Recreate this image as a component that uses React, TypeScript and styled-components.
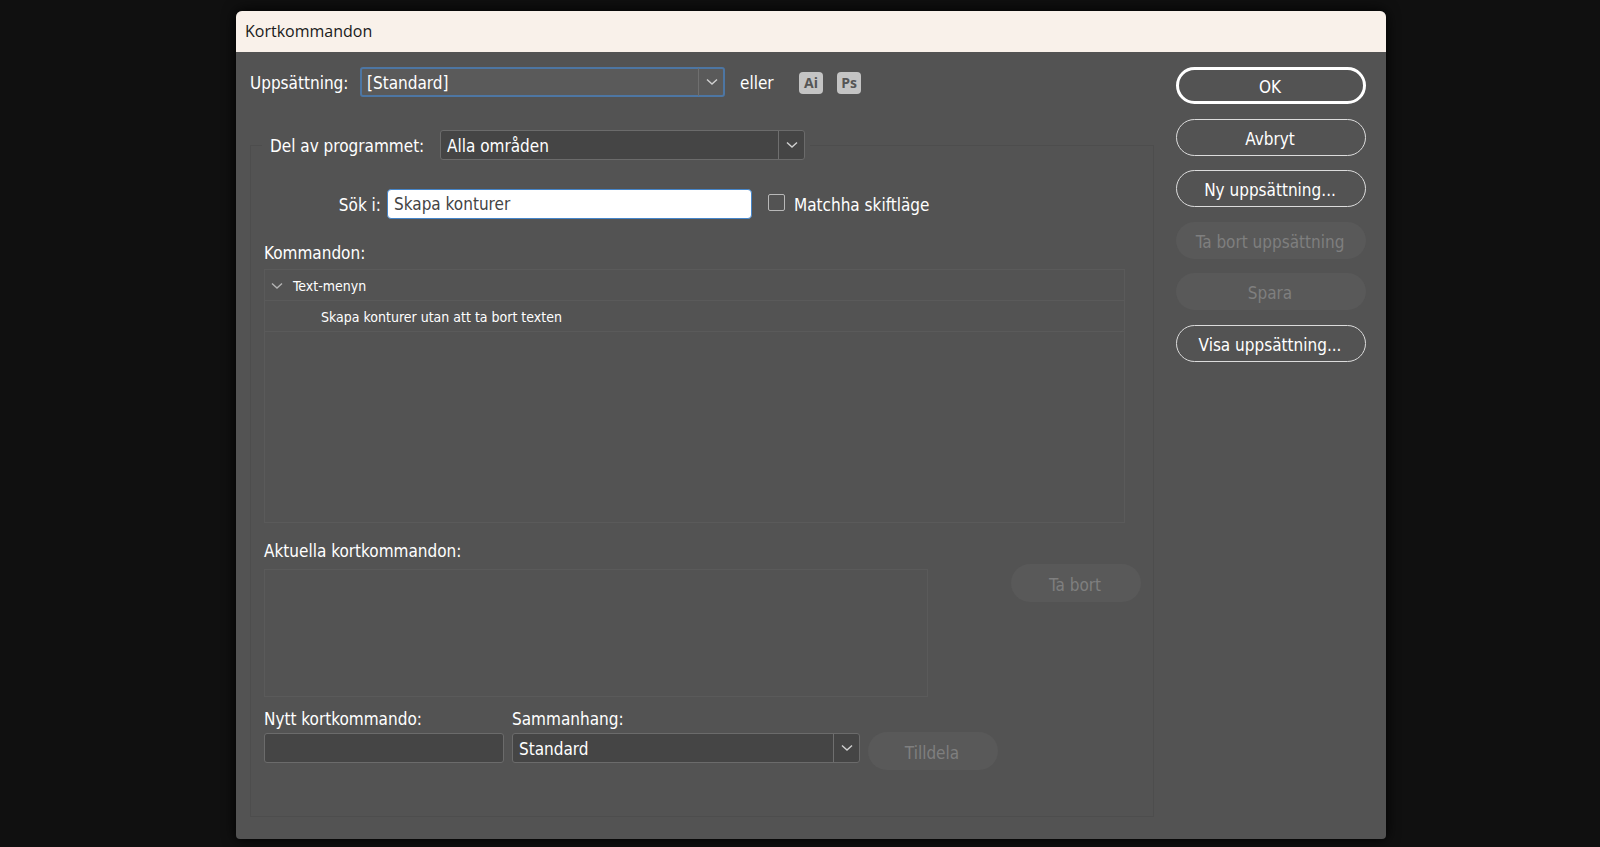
import React from "react";
import styled, { createGlobalStyle, css } from "styled-components";

const GlobalStyle = createGlobalStyle`
  *, *::before, *::after { box-sizing: border-box; }
  body {
    margin: 0;
    background: #101010;
    color: #fff;
    font: 17px/24px "DejaVu Sans Condensed", "Noto Sans", sans-serif;
  }
  button, input, select { font: inherit; color: inherit; margin: 0; }
`;

const Desktop = styled.div`
  display: flex;
  min-height: 100vh;
  padding: 11px 214px 8px 236px;
`;

const Dialog = styled.section`
  flex: 1;
  display: flex;
  flex-direction: column;
  background: #535353;
  border-radius: 6px 6px 4px 4px;
  box-shadow: 0 0 14px #000;
  overflow: hidden;
`;

const TitleBar = styled.header`
  height: 41px;
  flex: none;
  display: flex;
  align-items: center;
  padding: 0 9px 2px;
  background: #f9f1ea;
  color: #1a1a1a;
`;

const Title = styled.h1`
  margin: 0;
  font: 400 16px/24px "Open Sans", "Noto Sans", sans-serif;
`;

const Body = styled.form`
  flex: 1;
  display: flex;
  gap: 22px;
  padding: 15px 20px 22px 14px;
`;

const Main = styled.div`
  flex: 1;
  min-width: 0;
  display: flex;
  flex-direction: column;
  gap: 33px;
`;

const SetRow = styled.div`
  display: flex;
  align-items: center;
`;

const SetLabel = styled.label`
  width: 110px;
  padding-top: 2px;
`;

const OrText = styled.span`
  width: 59px;
  margin-left: 15px;
  padding-top: 2px;
`;

const AppButtons = styled.div`
  display: flex;
  gap: 14px;
  padding-top: 2px;
`;

const AppButton = styled.button`
  width: 24px;
  height: 22px;
  padding: 0;
  border: 0;
  border-radius: 4px;
  background: #c4c4c4;
  color: #555;
  font: 700 14px/20px "Open Sans", "Noto Sans", sans-serif;
`;

const Group = styled.fieldset`
  flex: 1;
  min-width: 0;
  margin: 0;
  padding: 29px 12px 46px 13px;
  border: 1px solid #4d4d4d;
  display: flex;
  flex-direction: column;
`;

const GroupLegend = styled.legend`
  display: flex;
  align-items: center;
  margin-left: -2px;
  padding: 0 5px 0 8px;
`;

const LegendLabel = styled.label`
  width: 170px;
  padding-top: 2px;
`;

const SelectFrame = styled.div<{ $width: number }>`
  position: relative;
  width: ${(p) => p.$width}px;
`;

const boxed = css`
  display: block;
  width: 100%;
  height: 30px;
  border: 1px solid #6b6b6b;
  border-radius: 3px;
  background: #454545;
  outline: 0;
`;

const SelectBox = styled.select<{ $focused?: boolean }>`
  ${boxed}
  appearance: none;
  padding: 2px 32px 0 6px;
  ${(p) =>
    p.$focused &&
    css`
      border: 2px solid #4d76a3;
      background: #5a5a5a;
      padding-left: 5px;
    `}
`;

const SelectArrow = styled.span`
  position: absolute;
  inset: 1px 1px 1px auto;
  width: 26px;
  display: grid;
  place-items: center;
  border-left: 1px solid #6f6f6f;
  pointer-events: none;
`;

const TextBox = styled.input`
  ${boxed}
  padding: 0 6px;
`;

const SearchBox = styled(TextBox)`
  width: 365px;
  border-color: #4585c9;
  border-radius: 4px;
  background: #fff;
  color: #444;
`;

const SearchRow = styled.div`
  display: flex;
  align-items: center;
`;

const SearchLabel = styled.label`
  width: 123px;
  padding: 2px 6px 0 0;
  text-align: right;
`;

const CheckLabel = styled.label`
  display: flex;
  align-items: flex-start;
  gap: 9px;
  margin-left: 16px;
`;

const CheckText = styled.span`
  padding-top: 2px;
`;

const CheckBox = styled.input`
  appearance: none;
  width: 17px;
  height: 17px;
  && {
    margin-top: 3px;
  }
  border: 1px solid #b8b8b8;
  border-radius: 2px;
`;

const Section = styled.section`
  flex: 1;
  display: flex;
  flex-direction: column;
  gap: 4px;
  margin: 22px 16px 0 0;
`;

const SectionLabel = styled.h2`
  margin: 0;
  font: inherit;
`;

const CommandTree = styled.ul`
  flex: 1;
  margin: 0;
  padding: 0;
  list-style: none;
  border: 1px solid #5a5a5a;
  font-size: 14px;
`;

const CommandItem = styled.li<{ $level: number }>`
  height: 31px;
  display: flex;
  align-items: center;
  gap: 10px;
  padding: 1px 0 0 ${(p) => (p.$level ? 56 : 6)}px;
  border-bottom: 1px solid #5a5a5a;
`;

const ShortcutRow = styled.div`
  display: flex;
  justify-content: space-between;
  align-items: flex-start;
  margin-top: 16px;
`;

const Shortcuts = styled.div`
  flex: 0 1 664px;
  display: grid;
  gap: 6px;
`;

const ShortcutList = styled.ul`
  height: 128px;
  margin: 0;
  padding: 0;
  border: 1px solid #5a5a5a;
`;

const AssignRow = styled.div`
  display: flex;
  align-items: flex-start;
  gap: 8px;
  margin-top: 10px;
`;

const Field = styled.div<{ $width: number }>`
  width: ${(p) => p.$width}px;
  display: grid;
  gap: 2px;
`;

const Rail = styled.div`
  width: 190px;
  height: 295px;
  display: flex;
  flex-direction: column;
  justify-content: space-between;
`;

const PillButton = styled.button<{ $primary?: boolean }>`
  width: 100%;
  height: 37px;
  padding: 3px 2px 0 0;
  border: ${(p) => (p.$primary ? "3px solid #fff" : "1px solid #dcdcdc")};
  border-radius: 19px;
  background: transparent;
  &:disabled {
    border-color: transparent;
    background: #595959;
    background-clip: border-box;
    color: #7f7f7f;
  }
`;

const ActionButton = styled(PillButton)`
  width: 130px;
  height: 38px;
  && {
    margin-top: 25px;
  }
`;

const Chevron = ({ color = "#d0d0d0" }: { color?: string }) => (
  <svg width="12" height="8" viewBox="0 0 12 8" fill="none" aria-hidden="true">
    <path d="M1 1.5 6 6l5-4.5" stroke={color} strokeWidth="1.4" />
  </svg>
);

type SelectProps = { id: string; width: number; option: string; focused?: boolean };

const Select = ({ id, width, option, focused }: SelectProps) => (
  <SelectFrame $width={width}>
    <SelectBox id={id} $focused={focused}>
      <option>{option}</option>
    </SelectBox>
    <SelectArrow>
      <Chevron />
    </SelectArrow>
  </SelectFrame>
);

const actions = [
  { label: "OK", primary: true },
  { label: "Avbryt" },
  { label: "Ny uppsättning..." },
  { label: "Ta bort uppsättning", disabled: true },
  { label: "Spara", disabled: true },
  { label: "Visa uppsättning..." },
];

export default function App() {
  return (
    <>
      <GlobalStyle />
      <Desktop>
        <Dialog role="dialog" aria-labelledby="title">
          <TitleBar>
            <Title id="title">Kortkommandon</Title>
          </TitleBar>
          <Body onSubmit={(e) => e.preventDefault()}>
            <Main>
              <SetRow>
                <SetLabel htmlFor="set">Uppsättning:</SetLabel>
                <Select id="set" width={365} option="[Standard]" focused />
                <OrText>eller</OrText>
                <AppButtons>
                  <AppButton type="button">Ai</AppButton>
                  <AppButton type="button">Ps</AppButton>
                </AppButtons>
              </SetRow>
              <Group>
                <GroupLegend>
                  <LegendLabel htmlFor="area">Del av programmet:</LegendLabel>
                  <Select id="area" width={365} option="Alla områden" />
                </GroupLegend>
                <SearchRow>
                  <SearchLabel htmlFor="search">Sök i:</SearchLabel>
                  <SearchBox id="search" type="text" defaultValue="Skapa konturer" />
                  <CheckLabel>
                    <CheckBox type="checkbox" />
                    <CheckText>Matchha skiftläge</CheckText>
                  </CheckLabel>
                </SearchRow>
                <Section>
                  <SectionLabel>Kommandon:</SectionLabel>
                  <CommandTree>
                    <CommandItem $level={0}>
                      <Chevron color="#b4b4b4" />
                      Text-menyn
                    </CommandItem>
                    <CommandItem $level={1}>Skapa konturer utan att ta bort texten</CommandItem>
                  </CommandTree>
                </Section>
                <ShortcutRow>
                  <Shortcuts>
                    <SectionLabel>Aktuella kortkommandon:</SectionLabel>
                    <ShortcutList />
                  </Shortcuts>
                  <ActionButton type="button" disabled>
                    Ta bort
                  </ActionButton>
                </ShortcutRow>
                <AssignRow>
                  <Field $width={240}>
                    <label htmlFor="shortcut">Nytt kortkommando:</label>
                    <TextBox id="shortcut" type="text" />
                  </Field>
                  <Field $width={348}>
                    <label htmlFor="context">Sammanhang:</label>
                    <Select id="context" width={348} option="Standard" />
                  </Field>
                  <ActionButton type="button" disabled>
                    Tilldela
                  </ActionButton>
                </AssignRow>
              </Group>
            </Main>
            <Rail>
              {actions.map((a) => (
                <PillButton
                  key={a.label}
                  type={a.primary ? "submit" : "button"}
                  $primary={a.primary}
                  disabled={a.disabled}
                >
                  {a.label}
                </PillButton>
              ))}
            </Rail>
          </Body>
        </Dialog>
      </Desktop>
    </>
  );
}
